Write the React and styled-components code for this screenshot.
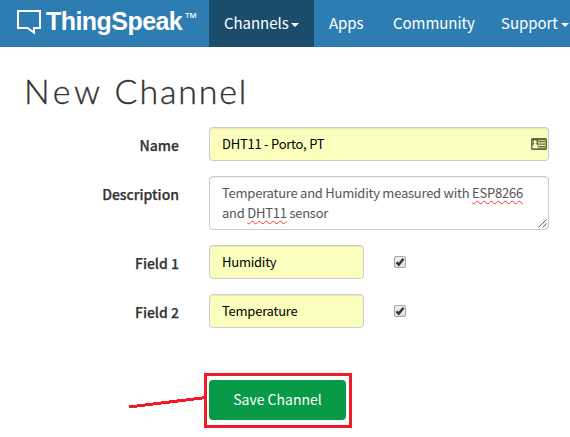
import React from "react";
import styled, { createGlobalStyle } from "styled-components";

const sans = `"Noto Sans CJK SC", "Open Sans", sans-serif`;

const fields = [
  { label: "Field 1", value: "Humidity" },
  { label: "Field 2", value: "Temperature" },
];

function Logo() {
  return (
    <Brand>
      <svg width="25" height="26" viewBox="0 0 25 26" fill="none">
        <path
          d="M1 1H23V18H17V22.6L10.5 18H1Z"
          stroke="#fff"
          strokeWidth="2"
        />
      </svg>
      <BrandName>ThingSpeak</BrandName>
      <Trademark>™</Trademark>
    </Brand>
  );
}

function CardIcon() {
  return (
    <svg width="16" height="12" viewBox="0 0 16 12">
      <rect width="16" height="12" rx="1.6" fill="#65663f" />
      <rect x="1.5" y="2" width="13" height="8.2" fill="#faffbd" />
      <rect x="1.5" y="2" width="6" height="8.2" fill="#65663f" />
      <circle cx="4.2" cy="4" r="1.7" fill="#faffbd" />
      <path d="M1.6 10.2V8L3.4 5.5H5L6.8 8V10.2Z" fill="#faffbd" />
      <path d="M8 3.5H14.5M8 6.1H14.5M8 8.7H14.5" stroke="#65663f" strokeWidth="1.4" />
    </svg>
  );
}

function Check() {
  return (
    <CheckBox>
      <svg width="10" height="10" viewBox="0 0 10 10">
        <path d="M1.5 5.3L3.8 7.6L8.5 1.8" fill="none" stroke="#383838" strokeWidth="2.4" />
      </svg>
    </CheckBox>
  );
}

function App() {
  return (
    <>
      <GlobalStyle />
      <Navbar>
        <Logo />
        <NavItem $active $width={105}>
          <NavText $width={63}>Channels</NavText>
          <Caret />
        </NavItem>
        <NavItem $width={64}>
          <NavText $width={34}>Apps</NavText>
        </NavItem>
        <NavItem $width={108}>
          <NavText $width={79}>Community</NavText>
        </NavItem>
        <NavItem $width={105}>
          <NavText $width={56}>Support</NavText>
          <Caret />
        </NavItem>
      </Navbar>

      <Page>
        <Title>
          <TitleWord>New</TitleWord> Channel
        </Title>
        <Form>
          <Row>
            <Label>Name</Label>
            <Input>
              DHT11 - Porto, PT
              <CardIcon />
            </Input>
          </Row>
          <Row>
            <Label>Description</Label>
            <TextArea>
              Temperature and Humidity measured with <Misspelt>ESP8266</Misspelt>
              <br />
              and <Misspelt>DHT11</Misspelt> sensor
              <Grip width="9" height="9" viewBox="0 0 9 9">
                <path d="M0.5 8.5L8.5 0.5M4.5 8.5L8.5 4.5" stroke="#555" />
              </Grip>
            </TextArea>
          </Row>
          {fields.map((field) => (
            <Row key={field.label}>
              <Label>{field.label}</Label>
              <FieldGroup>
                <Input $width={155}>{field.value}</Input>
                <Check />
              </FieldGroup>
            </Row>
          ))}
        </Form>
        <Actions>
          <SaveButton>Save Channel</SaveButton>
          <Highlight />
          <Pointer width="80" height="16" viewBox="0 0 80 16">
            <path d="M1 12L78 2.5" stroke="#ee1c24" strokeWidth="3" shapeRendering="crispEdges" />
          </Pointer>
        </Actions>
      </Page>
    </>
  );
}

const GlobalStyle = createGlobalStyle`
  * {
    box-sizing: border-box;
  }
  body {
    margin: 0;
    background: #fff;
    color: #333;
    font-family: ${sans};
    font-size: 13px;
  }
`;

const Navbar = styled.nav`
  display: flex;
  height: 47px;
  width: 570px;
  overflow: hidden;
  background: #2e7db2;
`;
const Brand = styled.div`
  display: flex;
  flex: none;
  align-items: flex-start;
  width: 209px;
  padding: 10px 0 0 17px;
  color: #fff;
  font-family: "Liberation Sans", Arial, sans-serif;
  svg {
    flex: none;
  }
`;
const BrandName = styled.span`
  margin: -3px 0 0 4px;
  font-size: 25px;
  font-weight: 700;
  line-height: 28px;
  letter-spacing: -0.55px;
`;
const Trademark = styled.span`
  margin: 1px 0 0 2px;
  font-size: 13px;
  line-height: 14px;
`;
const NavItem = styled.a`
  display: flex;
  flex: none;
  align-items: center;
  width: ${({ $width }) => $width}px;
  padding: 0 0 2px 15px;
  background: ${({ $active }) => ($active ? "#1c4c6c" : "transparent")};
  color: #fff;
`;
const NavText = styled.span`
  flex: none;
  width: ${({ $width }) => $width}px;
  font-size: 15px;
  line-height: 20px;
  letter-spacing: -0.05px;
  white-space: nowrap;
`;
const Caret = styled.span`
  margin: 4px 0 0 4px;
  border: 4px solid transparent;
  border-top-color: #fff;
  border-bottom: 0;
`;

const Page = styled.main`
  min-height: 390px;
  padding: 24px 21px 0 24px;
`;
const Title = styled.h1`
  margin: 0;
  height: 56px;
  font-family: Lato, sans-serif;
  font-size: 34px;
  font-weight: 300;
  line-height: 40px;
  letter-spacing: 1.8px;
  white-space: nowrap;
  -webkit-text-stroke: 0.35px #333;
`;
const TitleWord = styled.span`
  letter-spacing: 3.6px;
`;
const Form = styled.form`
  display: grid;
  gap: 15px;
`;
const Row = styled.div`
  display: grid;
  grid-template-columns: 155px 340px;
  column-gap: 30px;
`;
const Label = styled.label`
  padding-top: 8px;
  font-size: 14px;
  font-weight: 500;
  line-height: 20px;
  text-align: right;
  -webkit-text-stroke: 0.25px #333;
`;
const Input = styled.div`
  display: flex;
  align-items: center;
  justify-content: space-between;
  width: ${({ $width }) => $width || 340}px;
  height: 34px;
  padding: 0 1px 1px 12px;
  border: 1px solid #ccc;
  border-radius: 4px;
  background: #faffbd;
  box-shadow: inset 0 1px 1px rgba(0, 0, 0, 0.075);
  color: #000;
  line-height: 20px;
  letter-spacing: -0.24px;
`;
const TextArea = styled.div`
  position: relative;
  height: 54px;
  padding: 6px 12px;
  border: 1px solid #ccc;
  border-radius: 4px;
  box-shadow: inset 0 1px 1px rgba(0, 0, 0, 0.075);
  color: #555;
  line-height: 20px;
  letter-spacing: -0.24px;
  white-space: nowrap;
`;
const Misspelt = styled.span`
  text-decoration: underline wavy #f33 1px;
  text-underline-offset: 2px;
  text-decoration-skip-ink: none;
`;
const Grip = styled.svg`
  position: absolute;
  right: 1px;
  bottom: 1px;
`;
const FieldGroup = styled.div`
  display: flex;
  align-items: center;
  gap: 30px;
`;
const CheckBox = styled.span`
  display: flex;
  align-items: center;
  justify-content: center;
  width: 12px;
  height: 12px;
  border: 1px solid #a5a5a5;
  border-radius: 2px;
  background: linear-gradient(#f0f0f0, #dedede);
`;
const Actions = styled.div`
  position: relative;
  margin: 52px 0 0 185px;
  width: 137px;
`;
const SaveButton = styled.button`
  display: block;
  width: 137px;
  height: 40px;
  padding: 0 0 2px;
  border: 0;
  border-radius: 4px;
  background: #099a47;
  color: #fff;
  font-family: ${sans};
  font-size: 14px;
  line-height: 20px;
`;
/* red marker drawn around the button */
const Highlight = styled.div`
  position: absolute;
  inset: -7px -6px -8px -5px;
  border: 3px solid #ee1c24;
`;
const Pointer = styled.svg`
  position: absolute;
  top: 15px;
  left: -81px;
`;

export default App;
